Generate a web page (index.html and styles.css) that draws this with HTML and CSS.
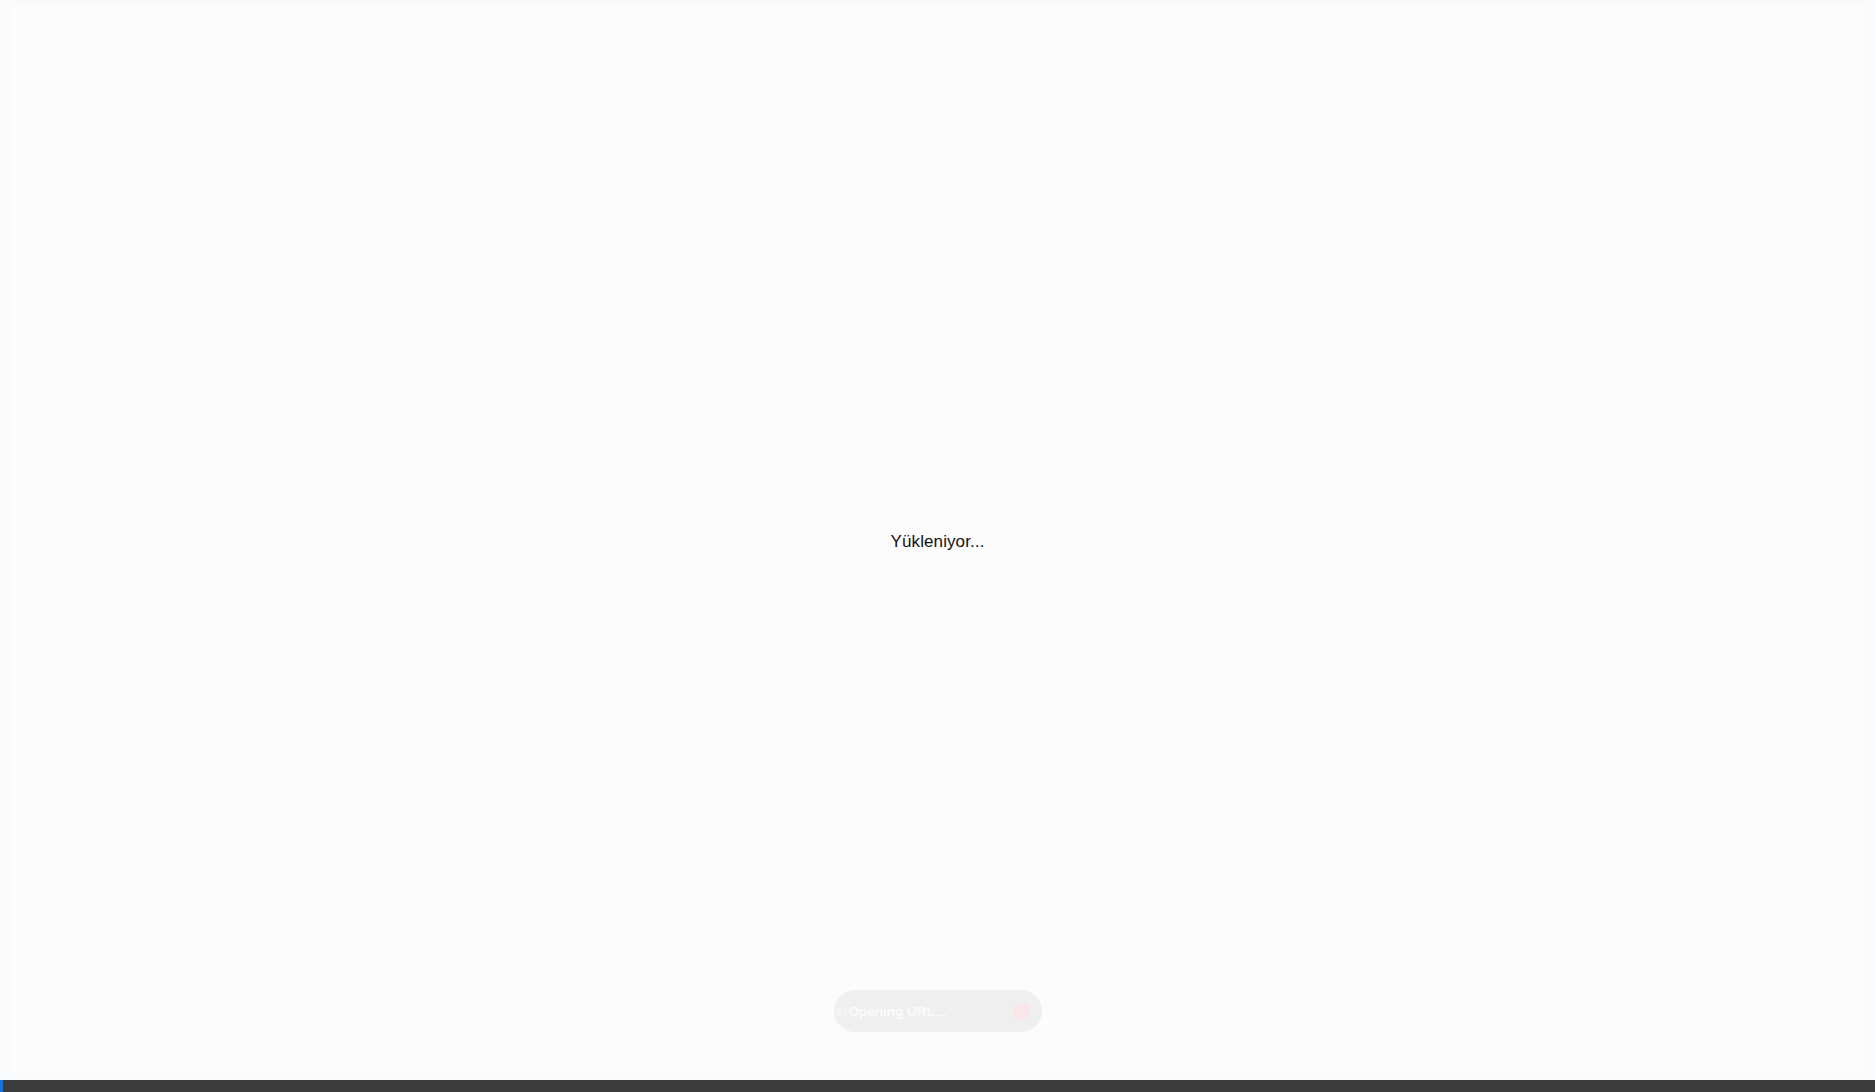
FILE: index.html
```html
<!DOCTYPE html>
<html lang="tr">
<head>
<meta charset="utf-8">
<title>Yükleniyor</title>
<link rel="stylesheet" href="styles.css">
</head>
<body>
<div class="app">
  <main class="stage">
    <div class="panel">
      <p class="loading">Yükleniyor...</p>
    </div>
    <div class="url-pill">
      <span class="url-text"><span class="ghost">st</span>Opening URL...</span>
      <span class="url-dot"></span>
    </div>
  </main>
  <footer class="statusbar"><span class="status-accent"></span></footer>
</div>
</body>
</html>
```
FILE: styles.css
```css
html, body {
  margin: 0;
  padding: 0;
  height: 100%;
}
body {
  background: #fbfbfd;
  font-family: "Liberation Sans", Arial, sans-serif;
  overflow: hidden;
}
.app {
  display: flex;
  flex-direction: column;
  width: 1875px;
  height: 1092px;
}
.stage {
  position: relative;
  flex: 1;
  display: flex;
  padding: 4px 10px 6px 10px;
  background: #f9fafc;
}
.panel {
  flex: 1;
  display: flex;
  align-items: center;
  justify-content: center;
  padding-top: 6px;
  background: #fdfcfc;
  border-radius: 6px;
}
.loading {
  margin: 0;
  font-size: 17px;
  color: #111;
  letter-spacing: 0.1px;
}
.url-pill {
  position: absolute;
  left: 50%;
  bottom: 48px;
  transform: translateX(-50%);
  width: 208px;
  height: 42px;
  box-sizing: border-box;
  border-radius: 21px;
  background: #efefef;
  display: flex;
  align-items: center;
  justify-content: space-between;
  padding: 0 12px 0 2px;
}
.url-text {
  font-size: 13.5px;
  color: #fbfbfb;
  white-space: nowrap;
  font-weight: 600;
}
.ghost {
  color: #f6f6f6;
  margin-right: 1px;
}
.url-dot {
  width: 17px;
  height: 17px;
  border-radius: 50%;
  background: #f9e6e9;
}
.statusbar {
  height: 12px;
  background: #3c3c3c;
  display: flex;
}
.status-accent {
  width: 3px;
  background: #1a6fe0;
}
```
